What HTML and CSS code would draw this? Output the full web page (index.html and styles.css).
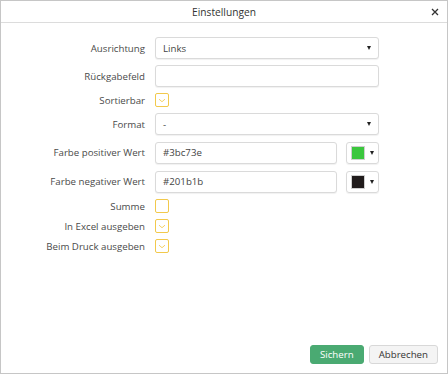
FILE: index.html
```html
<!DOCTYPE html>
<html lang="de">
<head>
<meta charset="utf-8">
<title>Einstellungen</title>
<link rel="stylesheet" href="styles.css">
</head>
<body>
<div class="dialog">
  <div class="header">
    <span class="title">Einstellungen</span>
    <svg class="close" viewBox="0 0 8 8"><path d="M1 1 L7 7 M7 1 L1 7"/></svg>
  </div>
  <div class="content">
    <div class="row">
      <label class="lbl">Ausrichtung</label>
      <div class="field select"><span>Links</span><span class="caret"></span></div>
    </div>
    <div class="row">
      <label class="lbl">Rückgabefeld</label>
      <div class="field"></div>
    </div>
    <div class="row cbrow">
      <label class="lbl">Sortierbar</label>
      <span class="cb checked"><svg viewBox="0 0 14 14"><path d="M3.5 6 L7 9 L10.5 6"/></svg></span>
    </div>
    <div class="row">
      <label class="lbl">Format</label>
      <div class="field select"><span>-</span><span class="caret"></span></div>
    </div>
    <div class="row colorrow">
      <label class="lbl">Farbe positiver Wert</label>
      <div class="colorfield">
        <div class="field"><span>#3bc73e</span></div>
        <div class="colorbtn"><span class="swatch green"></span><span class="caret"></span></div>
      </div>
    </div>
    <div class="row colorrow">
      <label class="lbl">Farbe negativer Wert</label>
      <div class="colorfield">
        <div class="field"><span>#201b1b</span></div>
        <div class="colorbtn"><span class="swatch dark"></span><span class="caret"></span></div>
      </div>
    </div>
    <div class="row cbrow">
      <label class="lbl">Summe</label>
      <span class="cb"></span>
    </div>
    <div class="row cbrow">
      <label class="lbl">In Excel ausgeben</label>
      <span class="cb checked"><svg viewBox="0 0 14 14"><path d="M3.5 6 L7 9 L10.5 6"/></svg></span>
    </div>
    <div class="row cbrow">
      <label class="lbl">Beim Druck ausgeben</label>
      <span class="cb checked"><svg viewBox="0 0 14 14"><path d="M3.5 6 L7 9 L10.5 6"/></svg></span>
    </div>
  </div>
  <div class="footer">
    <button class="btn primary">Sichern</button>
    <button class="btn">Abbrechen</button>
  </div>
</div>
</body>
</html>
```

FILE: styles.css
```css
html, body {
  margin: 0;
  padding: 0;
  background: #fff;
}
body {
  font-family: "Open Sans", "Noto Sans", sans-serif;
  font-size: 9.7px;
  color: #4a4a4a;
}
.dialog {
  width: 448px;
  height: 374px;
  box-sizing: border-box;
  border: 1px solid #c6c6c6;
  display: flex;
  flex-direction: column;
}
.header {
  height: 21px;
  border-bottom: 1px solid #dcdcdc;
  display: flex;
  align-items: center;
  justify-content: center;
  position: relative;
}
.title {
  font-size: 10.2px;
  color: #333;
}
.close {
  position: absolute;
  right: 8px;
  top: 7px;
  width: 8px;
  height: 8px;
}
.close path {
  stroke: #333;
  stroke-width: 1.3;
  fill: none;
}
.content {
  flex: 1;
  padding-top: 14px;
  display: flex;
  flex-direction: column;
  gap: 6px;
}
.row {
  display: grid;
  grid-template-columns: 144px 224px;
  column-gap: 10px;
  align-items: center;
  height: 22px;
}
.cbrow { height: 14px; }
.colorrow { height: 23px; }
.lbl {
  text-align: right;
  color: #4a4a4a;
  white-space: nowrap;
}
.field {
  box-sizing: border-box;
  height: 22px;
  border: 1px solid #dadada;
  border-radius: 3px;
  box-shadow: 0 1px 1px rgba(0,0,0,0.06);
  display: flex;
  align-items: center;
  padding: 0 7px;
  color: #444;
  background: #fff;
}
.select { justify-content: space-between; }
.caret {
  width: 0;
  height: 0;
  border-left: 2.5px solid transparent;
  border-right: 2.5px solid transparent;
  border-top: 4px solid #222;
}
.cb {
  box-sizing: border-box;
  width: 14px;
  height: 14px;
  border: 1px solid #f2c94c;
  border-radius: 2px;
  display: block;
}
.cb svg {
  display: block;
  width: 12px;
  height: 12px;
}
.cb svg path {
  fill: none;
  stroke: #f2c94c;
  stroke-width: 1;
}
.colorfield {
  display: flex;
  gap: 9px;
}
.colorfield .field { width: 182px; height: 22px; }
.colorbtn {
  box-sizing: border-box;
  width: 33px;
  height: 22px;
  border: 1px solid #dadada;
  border-radius: 3px;
  box-shadow: 0 1px 1px rgba(0,0,0,0.06);
  display: flex;
  align-items: center;
  padding-left: 4px;
  gap: 5px;
}
.swatch {
  width: 14px;
  height: 14px;
  box-sizing: border-box;
  border: 1px solid #cfcfcf;
}
.green { background: #3bc73e; }
.dark { background: #201b1b; }
.footer {
  display: flex;
  justify-content: flex-end;
  gap: 5px;
  padding: 0 9px 9px 0;
}
.btn {
  font-family: "Open Sans", "Noto Sans", sans-serif;
  font-size: 9.7px;
  height: 19px;
  padding: 0 9px;
  border: 1px solid #d8d8d8;
  border-radius: 3px;
  background: #f4f4f4;
  color: #333;
  line-height: 17px;
}
.btn.primary {
  background: #4aaa72;
  border-color: #4aaa72;
  color: #fff;
}
```
